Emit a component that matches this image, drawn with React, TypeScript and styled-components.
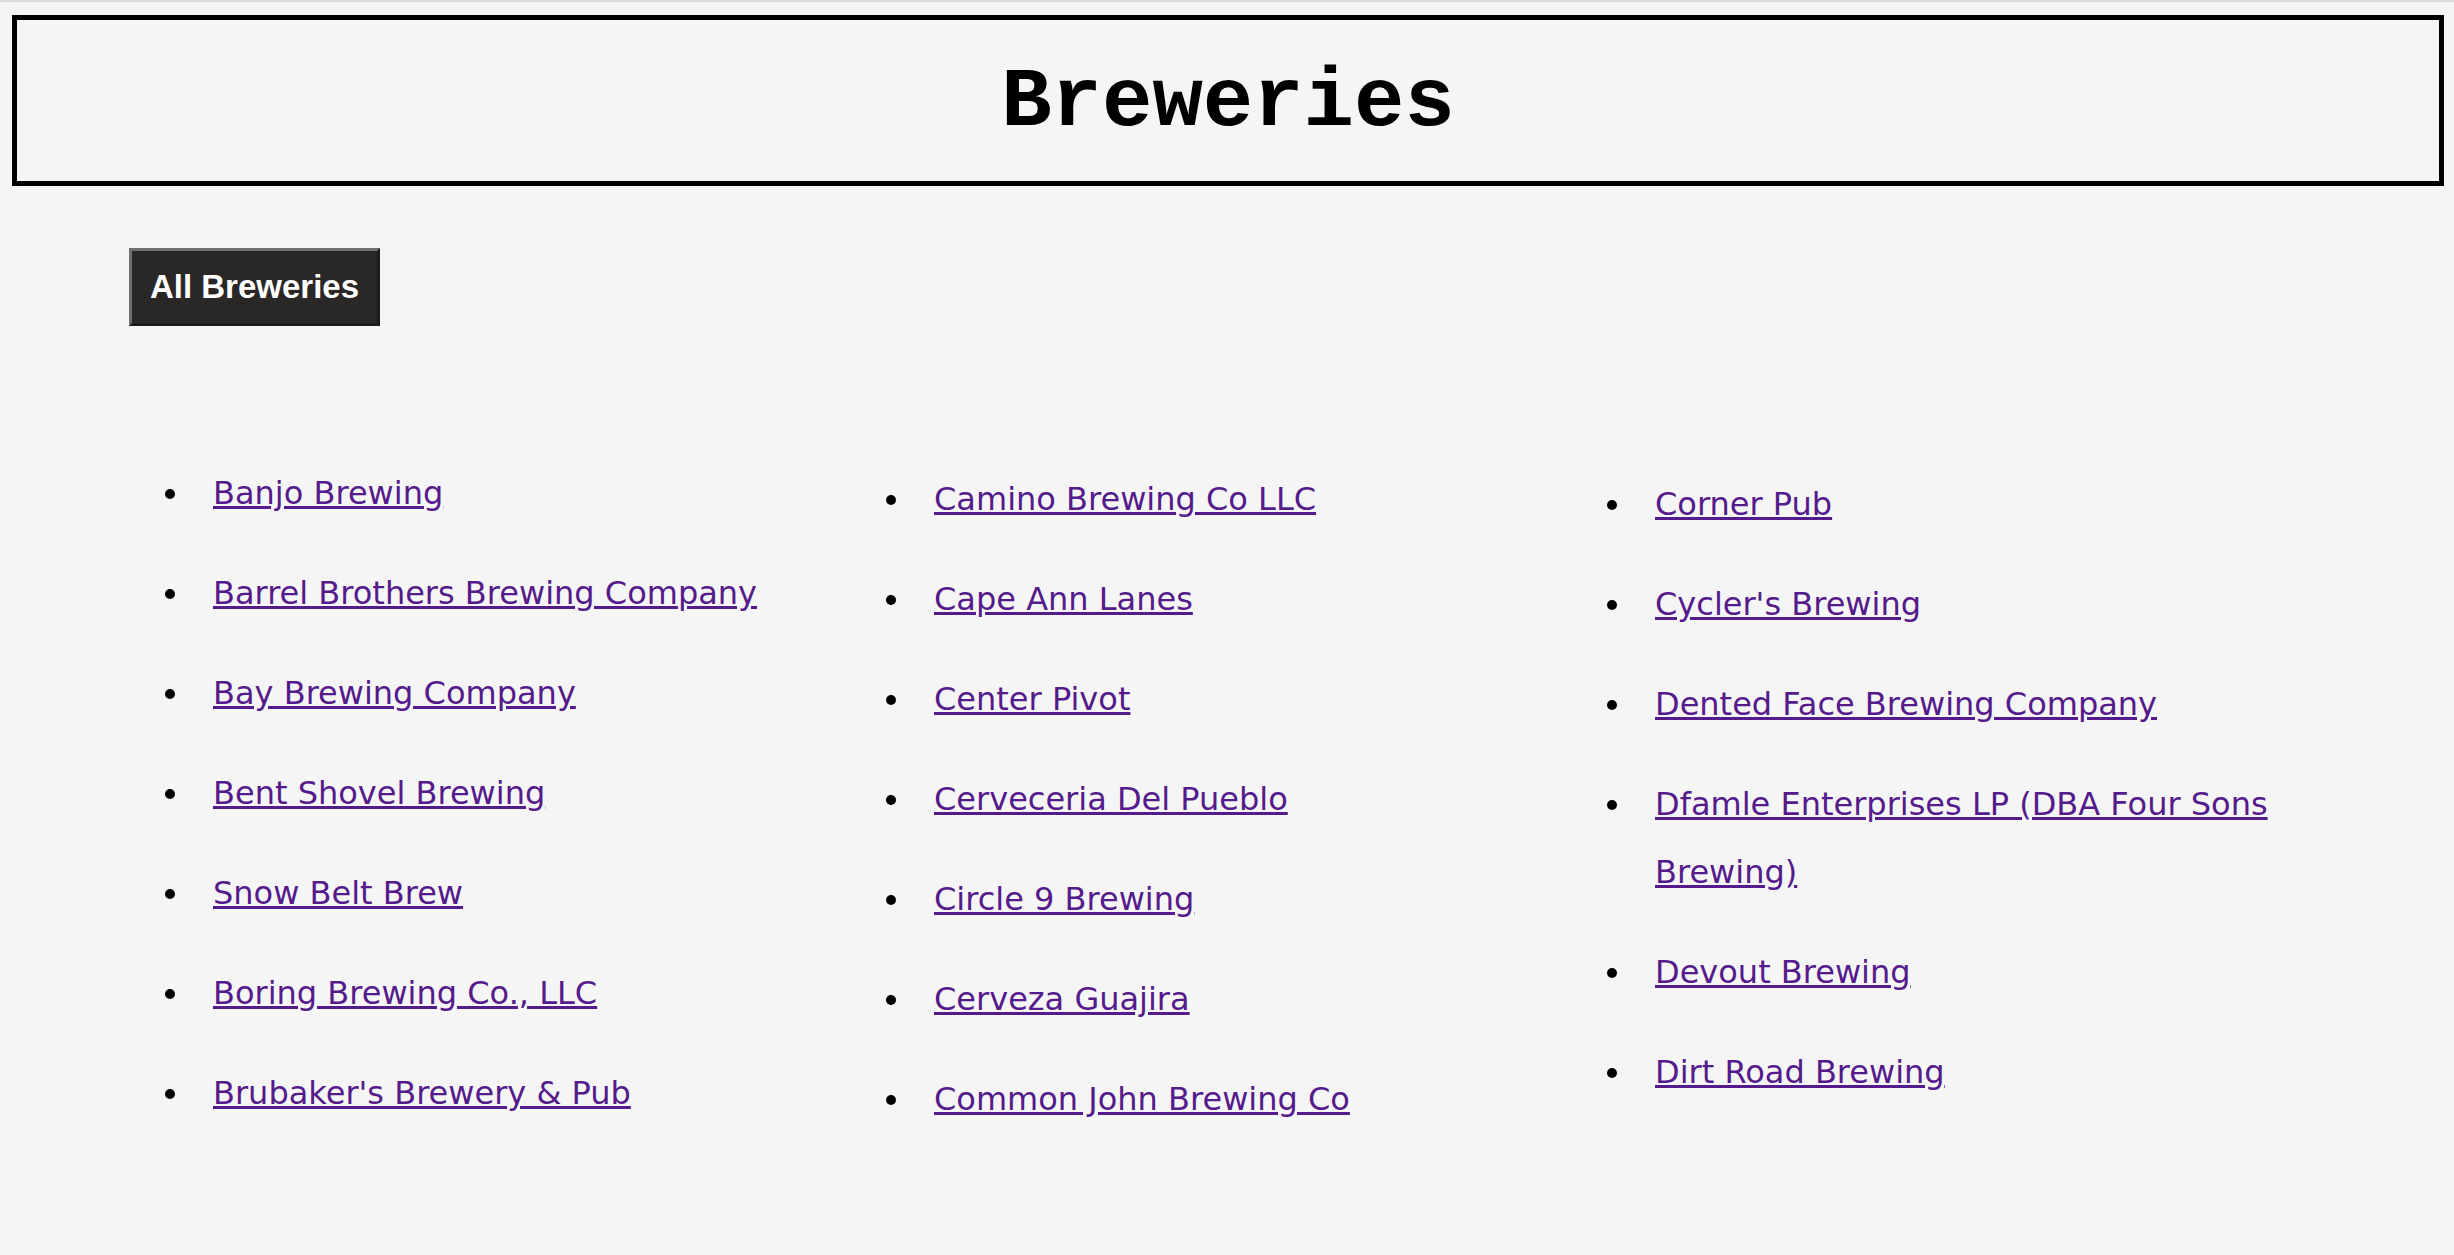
import React from 'react';
import styled, { createGlobalStyle } from 'styled-components';

const GlobalStyle = createGlobalStyle`
  html, body {
    margin: 0;
    padding: 0;
    background-color: #f5f5f5;
  }
`;

const TopRule = styled.div`
  height: 2px;
  background-color: #dcdcdc;
`;

const Header = styled.header`
  margin: 13px 10px 0 12px;
  height: 161px;
  border: 5px solid #000;
  display: flex;
  align-items: center;
  justify-content: center;
`;

const Title = styled.h1`
  margin: 0;
  padding-top: 4px;
  font-family: 'Liberation Mono', 'Courier New', monospace;
  font-weight: bold;
  font-size: 84px;
  line-height: 1;
  color: #000;
`;

const Main = styled.main`
  padding: 62px 0 0 129px;
`;

const AllButton = styled.button`
  width: 251px;
  height: 78px;
  padding: 0;
  border-width: 3px;
  border-style: solid;
  border-color: #6e6e6e #1c1c1c #1c1c1c #6e6e6e;
  background-color: #2a2827;
  color: #fff;
  font-family: 'Liberation Sans', Arial, sans-serif;
  font-weight: bold;
  font-size: 33px;
  cursor: pointer;
`;

const Columns = styled.div`
  display: flex;
  margin: 133px 0 0 44px;
`;

const Column = styled.ul<{ offset: number }>`
  width: 702px;
  margin: 0;
  padding: ${(props) => props.offset}px 0 0 19px;
  list-style: disc;
`;

const Item = styled.li`
  padding-left: 21px;
  font-family: 'DejaVu Sans', Verdana, sans-serif;
  font-size: 32px;
  line-height: 68px;
  margin-bottom: 32px;
  color: #000;
`;

const BreweryLink = styled.a`
  color: #551a8b;
  text-decoration: underline;
`;

const columns: string[][] = [
  [
    'Banjo Brewing',
    'Barrel Brothers Brewing Company',
    'Bay Brewing Company',
    'Bent Shovel Brewing',
    'Snow Belt Brew',
    'Boring Brewing Co., LLC',
    "Brubaker's Brewery & Pub",
  ],
  [
    'Camino Brewing Co LLC',
    'Cape Ann Lanes',
    'Center Pivot',
    'Cerveceria Del Pueblo',
    'Circle 9 Brewing',
    'Cerveza Guajira',
    'Common John Brewing Co',
  ],
  [
    'Corner Pub',
    "Cycler's Brewing",
    'Dented Face Brewing Company',
    'Dfamle Enterprises LP (DBA Four Sons Brewing)',
    'Devout Brewing',
    'Dirt Road Brewing',
  ],
];

const offsets = [0, 6, 11];

const App: React.FC = () => {
  return (
    <>
      <GlobalStyle />
      <TopRule />
      <Header>
        <Title>Breweries</Title>
      </Header>
      <Main>
        <AllButton>All Breweries</AllButton>
        <Columns>
          {columns.map((names, i) => (
            <Column key={i} offset={offsets[i]}>
              {names.map((name) => (
                <Item key={name}>
                  <BreweryLink href="#">{name}</BreweryLink>
                </Item>
              ))}
            </Column>
          ))}
        </Columns>
      </Main>
    </>
  );
};

export default App;
